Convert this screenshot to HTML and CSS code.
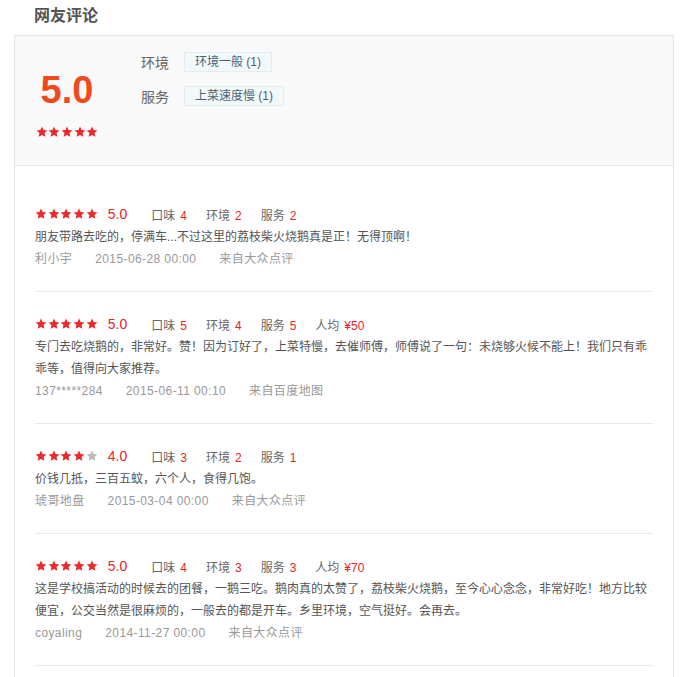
FILE: index.html
```html
<!DOCTYPE html>
<html lang="zh-CN">
<head>
    <meta charset="UTF-8">
    <meta name="viewport" content="width=device-width, initial-scale=1.0">
    <title>网友评论</title>
    <link rel="stylesheet" href="styles.css">
</head>
<body>
    <svg class="defs" width="0" height="0">
        <symbol id="star" viewBox="0 0 24 24">
            <path d="M12 1.2l3.2 7 7.6.8-5.7 5.1 1.6 7.5L12 17.8l-6.7 3.8 1.6-7.5-5.7-5.1 7.6-.8z"/>
        </symbol>
    </svg>

    <h2 class="title">网友评论</h2>
    <div class="card">
        <div class="summary">
            <div class="score">
                <div class="score-num">5.0</div>
                <div class="stars big">
                    <svg><use href="#star"/></svg><svg><use href="#star"/></svg><svg><use href="#star"/></svg><svg><use href="#star"/></svg><svg><use href="#star"/></svg>
                </div>
            </div>
            <div class="tags">
                <div class="tag-row">
                    <span class="tag-label">环境</span>
                    <span class="tag">环境一般 (1)</span>
                </div>
                <div class="tag-row">
                    <span class="tag-label">服务</span>
                    <span class="tag">上菜速度慢 (1)</span>
                </div>
            </div>
        </div>

        <div class="reviews">
            <div class="review">
                <div class="review-head">
                    <span class="stars">
                        <svg><use href="#star"/></svg><svg><use href="#star"/></svg><svg><use href="#star"/></svg><svg><use href="#star"/></svg><svg><use href="#star"/></svg>
                    </span>
                    <span class="rate">5.0</span>
                    <span class="item">口味<em>4</em></span>
                    <span class="item">环境<em>2</em></span>
                    <span class="item">服务<em>2</em></span>
                </div>
                <p class="text">朋友带路去吃的，停满车...不过这里的荔枝柴火烧鹅真是正！无得顶啊！</p>
                <div class="meta"><span>利小宇</span><span>2015-06-28 00:00</span><span>来自大众点评</span></div>
            </div>

            <div class="review">
                <div class="review-head">
                    <span class="stars">
                        <svg><use href="#star"/></svg><svg><use href="#star"/></svg><svg><use href="#star"/></svg><svg><use href="#star"/></svg><svg><use href="#star"/></svg>
                    </span>
                    <span class="rate">5.0</span>
                    <span class="item">口味<em>5</em></span>
                    <span class="item">环境<em>4</em></span>
                    <span class="item">服务<em>5</em></span>
                    <span class="item">人均<em>¥50</em></span>
                </div>
                <p class="text">专门去吃烧鹅的，非常好。赞！因为订好了，上菜特慢，去催师傅，师傅说了一句：未烧够火候不能上！我们只有乖乖等，值得向大家推荐。</p>
                <div class="meta"><span>137*****284</span><span>2015-06-11 00:10</span><span>来自百度地图</span></div>
            </div>

            <div class="review">
                <div class="review-head">
                    <span class="stars">
                        <svg><use href="#star"/></svg><svg><use href="#star"/></svg><svg><use href="#star"/></svg><svg><use href="#star"/></svg><svg class="off"><use href="#star"/></svg>
                    </span>
                    <span class="rate">4.0</span>
                    <span class="item">口味<em>3</em></span>
                    <span class="item">环境<em>2</em></span>
                    <span class="item">服务<em>1</em></span>
                </div>
                <p class="text">价钱几抵，三百五蚊，六个人，食得几饱。</p>
                <div class="meta"><span>琥哥地盘</span><span>2015-03-04 00:00</span><span>来自大众点评</span></div>
            </div>

            <div class="review">
                <div class="review-head">
                    <span class="stars">
                        <svg><use href="#star"/></svg><svg><use href="#star"/></svg><svg><use href="#star"/></svg><svg><use href="#star"/></svg><svg><use href="#star"/></svg>
                    </span>
                    <span class="rate">5.0</span>
                    <span class="item">口味<em>4</em></span>
                    <span class="item">环境<em>3</em></span>
                    <span class="item">服务<em>3</em></span>
                    <span class="item">人均<em>¥70</em></span>
                </div>
                <p class="text">这是学校搞活动的时候去的团餐，一鹅三吃。鹅肉真的太赞了，荔枝柴火烧鹅，至今心心念念，非常好吃！地方比较便宜，公交当然是很麻烦的，一般去的都是开车。乡里环境，空气挺好。会再去。</p>
                <div class="meta"><span>coyaling</span><span>2014-11-27 00:00</span><span>来自大众点评</span></div>
            </div>
        </div>
    </div>
</body>
</html>
```

FILE: styles.css
```css
body {
    margin: 0;
    font-family: "Liberation Sans", "Noto Sans CJK SC", sans-serif;
    font-size: 12px;
    color: #555;
    background: #fff;
}
.defs {
    position: absolute;
}
.title {
    margin: 0 0 3px;
    padding-left: 34px;
    font-size: 16px;
    line-height: 32px;
    font-weight: bold;
    color: #555;
}
.card {
    margin: 0 14px;
    border: 1px solid #e6e6e6;
    border-bottom: none;
}
.summary {
    display: flex;
    height: 113px;
    padding: 16px 20px 0;
    background: #f9f9f9;
    border-bottom: 1px solid #eaeaea;
}
.score {
    width: 64px;
    text-align: center;
}
.score-num {
    margin-top: 19px;
    font-size: 38px;
    line-height: 38px;
    font-weight: bold;
    color: #ef4a1e;
    font-family: "Liberation Sans", sans-serif;
}
.stars {
    display: inline-flex;
    gap: 0.7px;
}
.stars svg {
    width: 12px;
    height: 12px;
    fill: #ec2a2d;
}
.stars svg.off {
    fill: #bbb;
}
.stars.big {
    margin-top: 17px;
}
.tags {
    margin-left: 42px;
}
.tag-row {
    display: flex;
    align-items: center;
    height: 20px;
    margin-bottom: 14px;
}
.tag-label {
    width: 43px;
    font-size: 14px;
    color: #666;
}
.tag {
    padding: 0 10px;
    line-height: 18px;
    background: #f3f9fb;
    border: 1px solid #e1eef2;
    color: #4a6270;
}
.reviews {
    padding: 16px 20px 11px;
}
.review {
    padding: 20px 0 21px;
    border-bottom: 1px solid #e8e8e8;
}
.review-head {
    display: flex;
    align-items: center;
    height: 24px;
}
.rate {
    margin: 0 24px 0 10px;
    font-size: 14px;
    color: #e5262b;
}
.item {
    margin-right: 19px;
    color: #666;
}
.item em {
    font-style: normal;
    margin-left: 5px;
    color: #e5262b;
}
.text {
    margin: 0;
    line-height: 22px;
    color: #555;
}
.meta {
    line-height: 22px;
    color: #999;
}
.meta span {
    margin-right: 23px;
    letter-spacing: 0.4px;
}
```
